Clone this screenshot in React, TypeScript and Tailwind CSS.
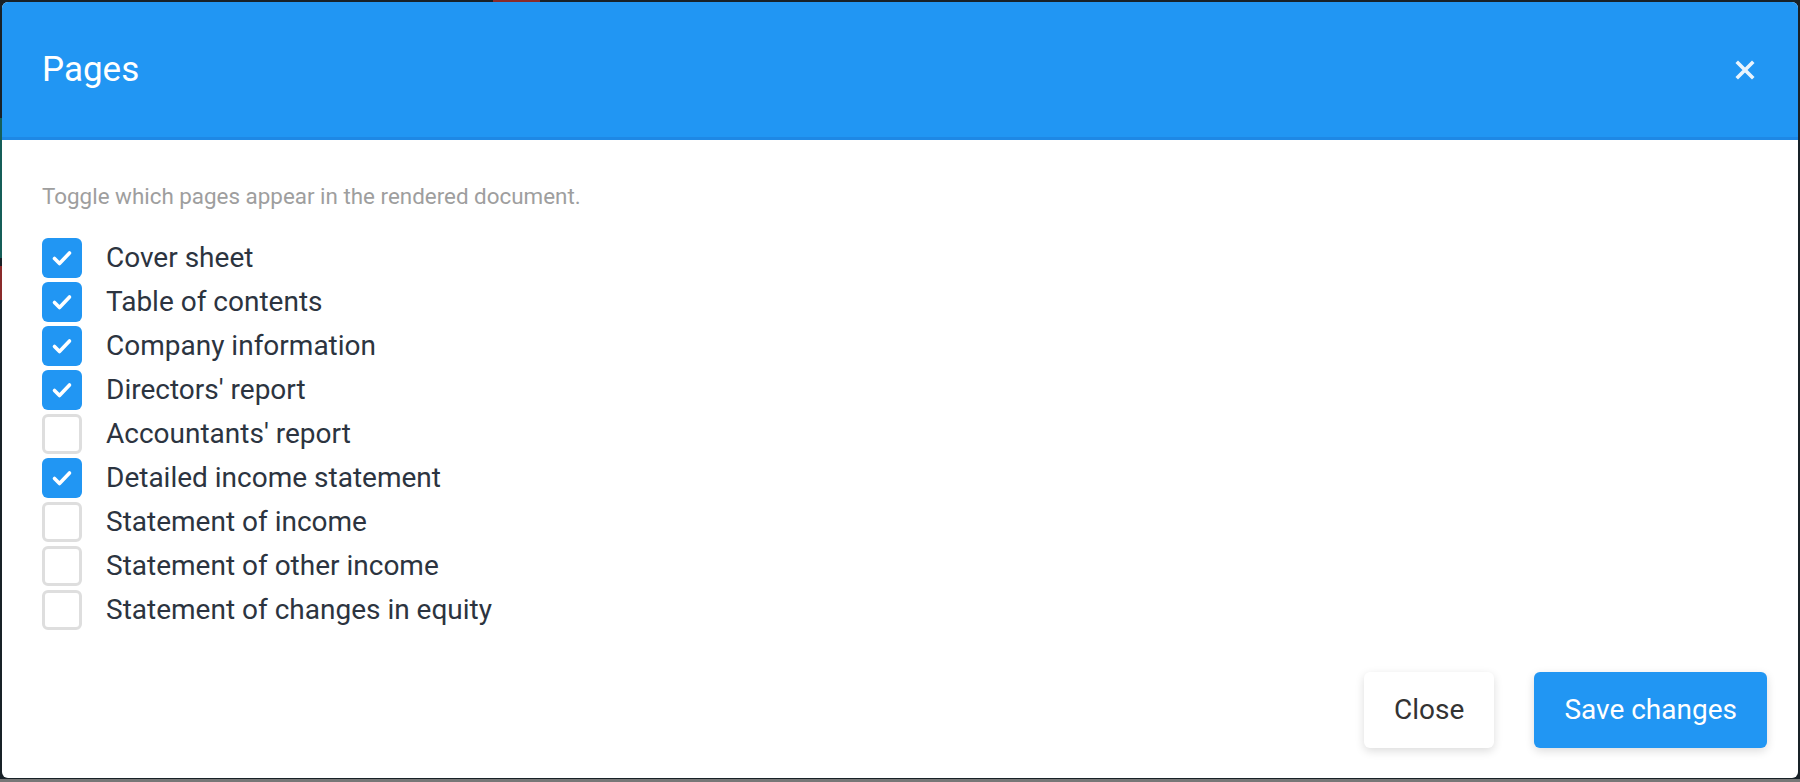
import { useState } from 'react'

const PAGES = [
  { id: 'cover', label: 'Cover sheet', on: true },
  { id: 'toc', label: 'Table of contents', on: true },
  { id: 'company', label: 'Company information', on: true },
  { id: 'directors', label: "Directors' report", on: true },
  { id: 'accountants', label: "Accountants' report", on: false },
  { id: 'detailed', label: 'Detailed income statement', on: true },
  { id: 'income', label: 'Statement of income', on: false },
  { id: 'other', label: 'Statement of other income', on: false },
  { id: 'equity', label: 'Statement of changes in equity', on: false },
]

function Checkbox({ checked, onChange }: { checked: boolean; onChange: () => void }) {
  return (
    <button
      type="button"
      onClick={onChange}
      className={
        checked
          ? 'flex h-[40px] w-[40px] shrink-0 items-center justify-center rounded-[6px] bg-[#2196f3]'
          : 'flex h-[40px] w-[40px] shrink-0 items-center justify-center rounded-[6px] border-[3px] border-[#dedede] bg-white'
      }
    >
      {checked && (
        <svg width="22" height="22" viewBox="0 0 22 22" fill="none">
          <path d="M3.5 11.5l5 5 10-10.5" stroke="#fff" strokeWidth="3.6" strokeLinecap="round" strokeLinejoin="round" />
        </svg>
      )}
    </button>
  )
}

export default function App() {
  const [pages, setPages] = useState(PAGES)

  function toggle(id: string) {
    setPages((prev) => prev.map((p) => (p.id === id ? { ...p, on: !p.on } : p)))
  }

  return (
    <div
      className="relative min-h-[782px] overflow-hidden bg-[#182127] p-[2px]"
      style={{ fontFamily: 'Roboto, "Noto Sans", sans-serif' }}
    >
      {/* bits of the page behind the modal */}
      <div className="absolute left-0 top-[118px] h-[140px] w-[2px] bg-[#155e58]" />
      <div className="absolute left-0 top-[266px] h-[34px] w-[2px] bg-[#8a2a2a]" />
      <div className="absolute left-[493px] top-0 h-[2px] w-[47px] bg-[#8a2a2a]" />
      <div className="absolute bottom-0 left-0 h-[3px] w-full bg-[#777]" />

      <div className="relative flex flex-col overflow-hidden rounded-[6px] bg-white">
        <div className="flex h-[138px] items-center justify-between border-b-[3px] border-[#1e88e5] bg-[#2196f3] pl-[40px] pr-[41px]">
          <h2 className="text-[35px] font-normal leading-none text-white">Pages</h2>
          <button type="button" className="flex h-[24px] w-[24px] items-center justify-center opacity-90">
            <svg width="20" height="20" viewBox="0 0 20 20" fill="none">
              <path d="M3 3l14 14M17 3L3 17" stroke="#fff" strokeWidth="3.6" strokeLinecap="square" />
            </svg>
          </button>
        </div>

        <div className="flex flex-col px-[40px] pt-[40px]">
          <p className="text-[22.4px] leading-[32px] text-[#9e9e9e]">
            Toggle which pages appear in the rendered document.
          </p>
          <ul className="mt-[26px] flex flex-col gap-[4px]">
            {pages.map((p) => (
              <li key={p.id} className="flex h-[40px] items-center gap-[24px]">
                <Checkbox checked={p.on} onChange={() => toggle(p.id)} />
                <span className="text-[28px] leading-[40px] text-[#2c3440]">{p.label}</span>
              </li>
            ))}
          </ul>
        </div>

        <div className="flex items-center justify-end gap-[40px] pb-[30px] pr-[31px] pt-[42px]">
          <button
            type="button"
            className="h-[76px] rounded-[6px] bg-white px-[30px] text-[28px] text-[#333] shadow-[0_3px_10px_rgba(0,0,0,0.14)]"
          >
            Close
          </button>
          <button
            type="button"
            className="h-[76px] rounded-[6px] bg-[#2196f3] px-[30px] text-[28px] text-white shadow-[0_3px_10px_rgba(0,0,0,0.14)]"
          >
            Save changes
          </button>
        </div>
      </div>
    </div>
  )
}
